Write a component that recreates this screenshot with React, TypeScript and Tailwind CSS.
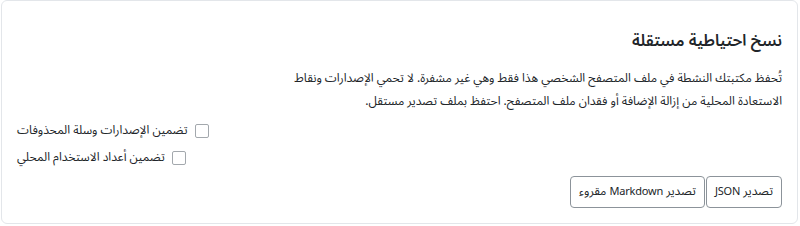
export default function App() {
  return (
    <div
      dir="rtl"
      className="w-[800px] h-[226px] bg-white pl-[1px] pr-[2px] pb-[2px]"
      style={{ fontFamily: '"Noto Sans Arabic", "Noto Sans", "DejaVu Sans", sans-serif' }}
    >
      <section className="h-full rounded-md border border-[#e3e6ea] bg-white px-[15px] pt-[22px] pb-[15px] flex flex-col text-[#212529]">
        <h2 className="text-[16px] font-semibold leading-[36px]">نسخ احتياطية مستقلة</h2>
        <p className="mt-[8px] text-[12px]">
          <span className="block h-[23px] leading-[23px]">
            تُحفظ مكتبتك النشطة في ملف المتصفح الشخصي هذا فقط وهي غير مشفرة. لا تحمي الإصدارات ونقاط
          </span>
          <span className="block h-[23px] leading-[23px]">
            الاستعادة المحلية من إزالة الإضافة أو فقدان ملف المتصفح. احتفظ بملف تصدير مستقل.
          </span>
        </p>

        <div className="mt-[8px] flex flex-col items-end gap-[7px] text-[12px]">
          <label className="flex items-center gap-[7px] h-[20px]">
            <input type="checkbox" className="appearance-none w-[14px] h-[14px] rounded-[2px] border border-[#a3a8ad] bg-white" />
            <span>تضمين الإصدارات وسلة المحذوفات</span>
          </label>
          <label className="flex items-center gap-[7px] h-[20px]">
            <input type="checkbox" className="appearance-none w-[14px] h-[14px] rounded-[2px] border border-[#a3a8ad] bg-white" />
            <span>تضمين أعداد الاستخدام المحلي</span>
          </label>
        </div>

        <div className="mt-auto flex gap-[1px]">
          <button className="h-[32px] px-[8px] rounded-[4px] border border-[#8c939a] bg-white text-[12px] text-[#212529]">
            تصدير <span className="text-[11px] tracking-[-0.2px]">JSON</span>
          </button>
          <button className="h-[32px] px-[8px] rounded-[4px] border border-[#8c939a] bg-white text-[12px] text-[#212529]">
            تصدير <span className="text-[11px] tracking-[-0.2px]">Markdown</span> مقروء
          </button>
        </div>
      </section>
    </div>
  );
}
